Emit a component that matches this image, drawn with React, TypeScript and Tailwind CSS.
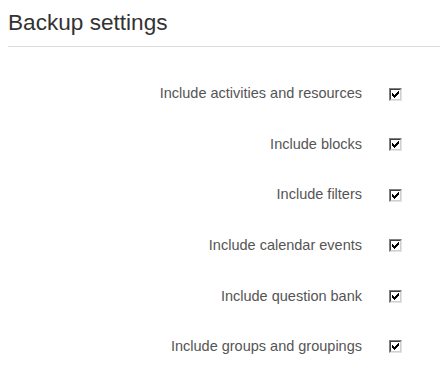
import React from "react";

const items = [
  "Include activities and resources",
  "Include blocks",
  "Include filters",
  "Include calendar events",
  "Include question bank",
  "Include groups and groupings",
];

const Check = () => (
  <span className="relative block w-[13px] h-[13px] bg-white border border-t-[#808080] border-l-[#808080] border-b-[#e3e3e3] border-r-[#e3e3e3]">
    <span className="absolute inset-0 border border-t-[#404040] border-l-[#404040] border-b-[#d4d0c8] border-r-[#d4d0c8]" />
    <svg className="absolute left-[2px] top-[2px]" width="7" height="7" viewBox="0 0 7 7">
      <path d="M0 2h1v1h1v1h1v-1h1v-1h1v-1h1v-1h1v3h-1v1h-1v1h-1v1h-1v1h-1v-1h-1v-1h-1z" fill="#000" />
    </svg>
  </span>
);

export default function App() {
  return (
    <div className="w-[440px] h-[371px] bg-white font-['Liberation_Sans',Arial,sans-serif]">
      <div className="pl-[8px] pt-[10px]">
        <h2 className="text-[22.6px] leading-[26px] text-[#333] pb-[10px] border-b border-[#dddddd]">
          Backup settings
        </h2>
      </div>
      <div className="flex flex-col gap-[30.6px] mt-[37px]">
        {items.map((t) => (
          <div key={t} className="flex items-center justify-end h-[20px] pr-[38px]">
            <span className="text-[14.5px] text-[#555] mr-[27px]">{t}</span>
            <Check />
          </div>
        ))}
      </div>
    </div>
  );
}
